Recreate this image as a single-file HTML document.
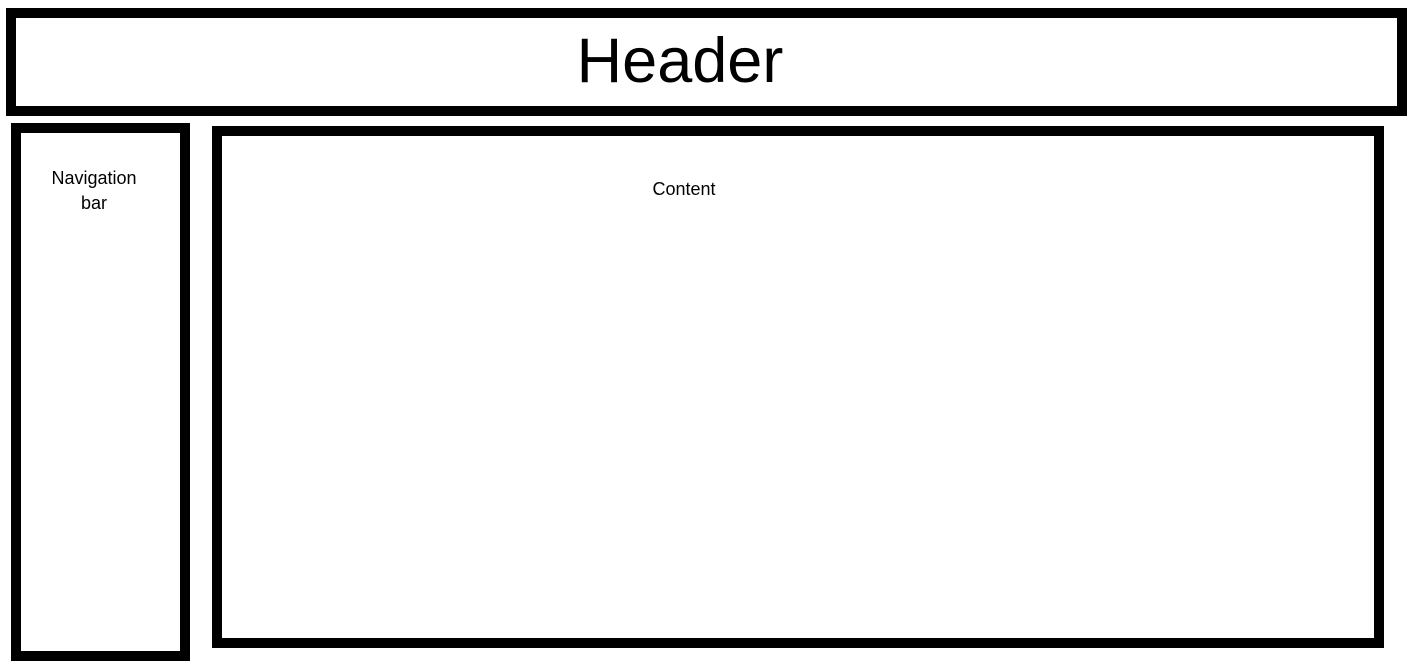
<!DOCTYPE html>
<html><head><meta charset="utf-8"><style>
html,body{margin:0;padding:0;background:#fff;width:1416px;height:672px;overflow:hidden;font-family:"Liberation Sans",sans-serif;color:#000}
.b{position:absolute;box-sizing:border-box;border:10px solid #000}
.t{position:absolute;text-align:center;white-space:nowrap}
</style></head><body>
<div class="b" style="left:6px;top:8px;width:1401px;height:108px"></div>
<div class="b" style="left:11px;top:123px;width:179px;height:538px"></div>
<div class="b" style="left:212px;top:126px;width:1172px;height:522px"></div>
<div class="t" style="left:480px;width:400px;top:30px;font-size:63px;line-height:63px">Header</div>
<div class="t" style="left:14px;width:160px;top:166px;font-size:18px;line-height:25px">Navigation<br>bar</div>
<div class="t" style="left:584px;width:200px;top:177px;font-size:18px;line-height:25px">Content</div>
</body></html>
